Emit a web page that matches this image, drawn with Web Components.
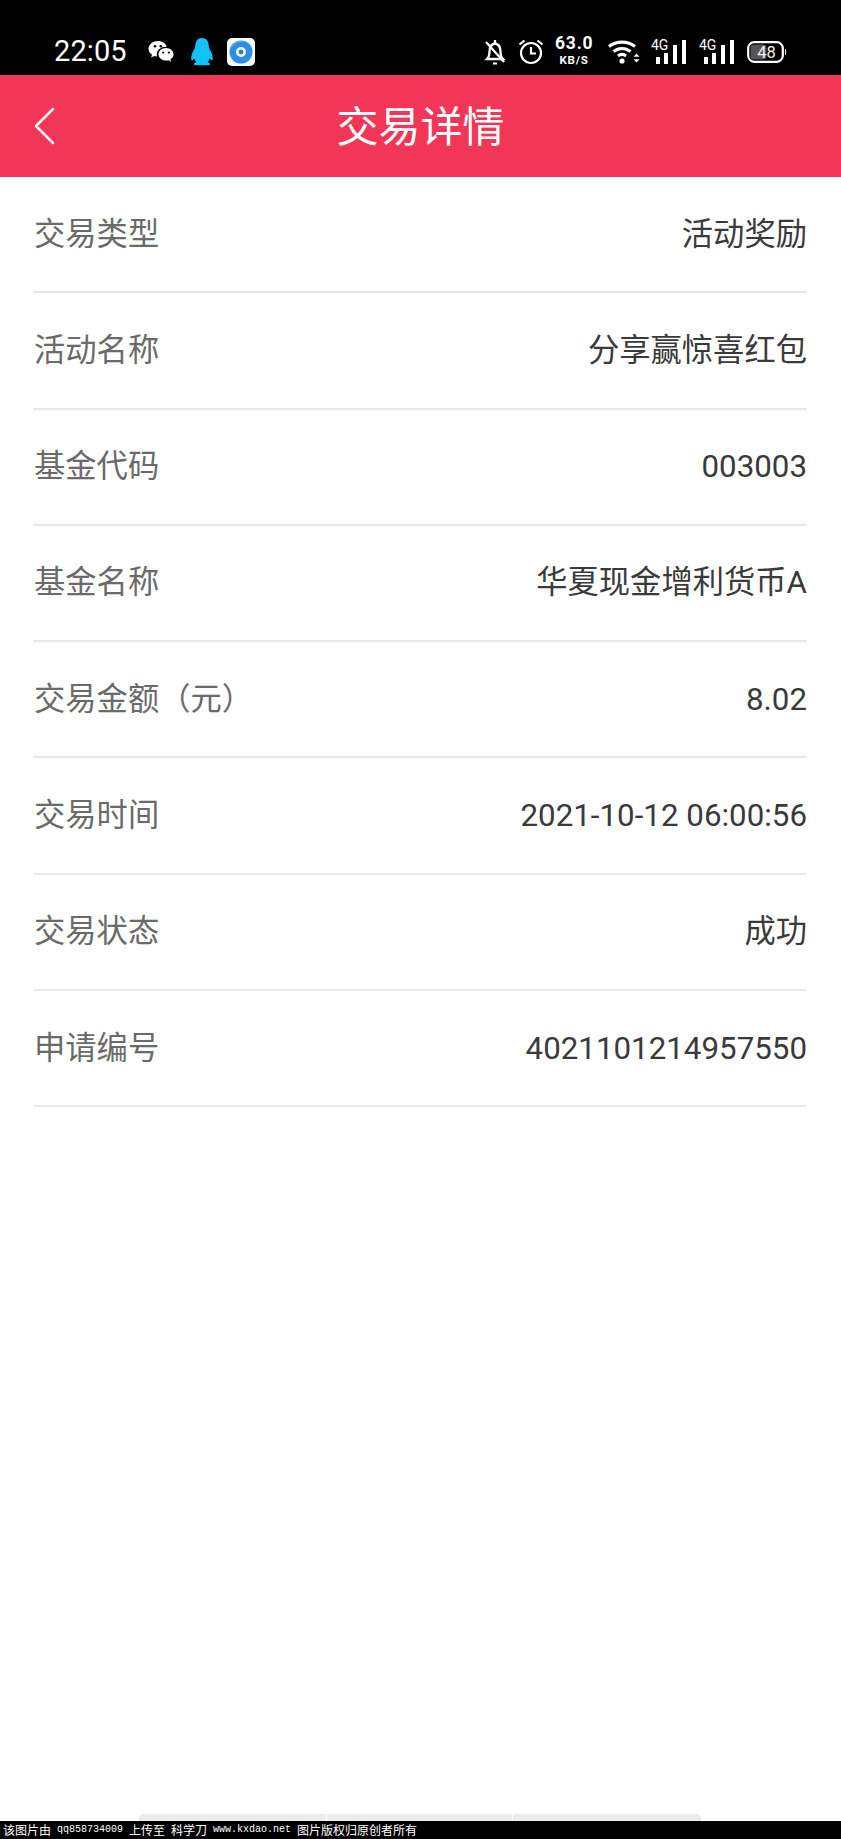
<!DOCTYPE html>
<html><head><meta charset="utf-8">
<style>
html,body{margin:0;padding:0;background:#fff}
body{width:841px;height:1839px;display:flex;flex-direction:column;font-family:Roboto,"Noto Sans CJK SC",sans-serif;overflow:hidden}
</style></head><body>
<status-bar></status-bar>
<nav-bar title="交易详情"></nav-bar>
<detail-list>
<detail-row label="交易类型" value="活动奖励"></detail-row>
<detail-row label="活动名称" value="分享赢惊喜红包"></detail-row>
<detail-row label="基金代码" value="003003"></detail-row>
<detail-row label="基金名称" value="华夏现金增利货币A"></detail-row>
<detail-row label="交易金额（元）" value="8.02"></detail-row>
<detail-row label="交易时间" value="2021-10-12 06:00:56"></detail-row>
<detail-row label="交易状态" value="成功"></detail-row>
<detail-row label="申请编号" value="4021101214957550"></detail-row>
</detail-list>
<bottom-tabs></bottom-tabs>
<water-mark></water-mark>
<script>
function def(name,html,setup){
  customElements.define(name,class extends HTMLElement{
    connectedCallback(){
      if(this.shadowRoot)return;
      const r=this.attachShadow({mode:'open'});
      r.innerHTML=html;
      if(setup)setup(r,this);
    }
  });
}
const sig=`<svg width="36" height="28" viewBox="0 0 36 28"><text x="0" y="12" font-family="Roboto" font-size="14" fill="#fff">4G</text><g fill="#fff"><rect x="5" y="19" width="4" height="7"/><rect x="13" y="15" width="4" height="11"/><rect x="22" y="7" width="4" height="19"/><rect x="31" y="2" width="4" height="24"/></g></svg>`;
def('status-bar',`<style>
:host{display:flex;align-items:center;height:75px;background:#000;color:#fff;box-sizing:border-box;padding:28px 0 0 54px;flex:none}
.t{font:29px/1 Roboto,sans-serif;width:94px;letter-spacing:.1px}
.l{display:flex;align-items:center;gap:16px}
.r{margin-left:auto;display:flex;align-items:center;height:40px;padding-right:54px}
svg{display:block}
.sp{font:700 17.500px/1 Roboto,sans-serif;letter-spacing:.8px;text-align:center;width:38px;margin:-2px 0 0 11px}
.sp small{display:block;font-size:11.500px;line-height:1;letter-spacing:.8px;margin-top:3px}
</style>
<span class="t">22:05</span>
<span class="l">
<svg width="26" height="24" viewBox="0 0 26 24"><path fill="#fff" d="M10 1C4.700 1 .5 4.400.5 8.800c0 2.500 1.400 4.600 3.500 6l-.9 2.800 3.200-1.700c.9.300 1.800.4 2.800.5-.2-.7-.3-1.300-.3-2 0-4.300 4.100-7.600 9.100-7.600h.8C17.800 3.300 14.300 1 10 1z"/><path fill="#fff" d="M25.500 14.300c0-3.500-3.400-6.300-7.500-6.300s-7.500 2.800-7.500 6.300 3.400 6.300 7.500 6.300c.8 0 1.700-.1 2.400-.4l2.700 1.500-.7-2.400c2-1.100 3.100-2.800 3.100-4.500z"/><g fill="#000"><circle cx="7" cy="6.300" r="1.300"/><circle cx="12.800" cy="6.300" r="1.300"/><circle cx="15.200" cy="12.600" r="1.100"/><circle cx="20.800" cy="12.600" r="1.100"/></g></svg>
<svg width="24" height="28" viewBox="0 0 24 28"><path fill="#12c2f7" d="M12 0C7.500 0 5.500 3.500 5.300 7.500c0 2-.9 3.300-1.900 5.200C1.700 16 .7 20.400 1.500 22c.7.900 2.100-.7 2.800-1.500.3 1.400 1 2.600 2 3.500-1.400.5-2.500 1.200-2.400 2.200.2 1.400 5.200 1.300 8.100.8 2.900.5 7.900.6 8.100-.8.100-1-1-1.700-2.400-2.200 1-.9 1.700-2.100 2-3.500.7.800 2.100 2.400 2.800 1.500.8-1.600-.2-6-1.900-9.300-1-1.900-1.900-3.200-1.900-5.200C18.500 3.500 16.500 0 12 0z"/></svg>
<svg width="28" height="28" viewBox="0 0 28 28" style="margin-left:-3px"><rect width="28" height="28" rx="5" fill="#fbfdff"/><circle cx="14" cy="14" r="11.500" fill="#2a8fe6"/><path d="M3.500 12A11 11 0 0 1 20 4.500 12 12 0 0 0 3.500 12z" fill="#9fd0f5"/><circle cx="14" cy="14" r="5" fill="#fff"/><circle cx="14" cy="14" r="2.400" fill="#1f7fd6"/></svg>
</span>
<span class="r">
<svg width="22" height="28" viewBox="0 0 22 28" fill="none" stroke="#fff" stroke-width="2.300"><path d="M3 21c2-2 2.500-3.500 2.500-7 0-4.500 2-8 5.500-8.500 3.500.5 5.500 4 5.500 8.500 0 3 .5 5 2.500 7z"/><path d="M2 4l18 20"/><path d="M9 25.500h4" stroke-width="2"/><path d="M11 2v3"/></svg>
<svg width="26" height="27" viewBox="0 0 26 27" fill="none" stroke="#fff" stroke-width="2.200" style="margin-left:12px"><circle cx="13" cy="15" r="10"/><path d="M13 9v6.500h5"/><path d="M1.500 6.500l5-4M24.500 6.500l-5-4"/></svg>
<span class="sp">63.0<small>KB/S</small></span>
<svg width="32" height="24" viewBox="0 0 32 24" fill="none" stroke="#fff" stroke-width="3.200" style="margin-left:15px"><path d="M1 6.500C8 .6 20 .6 27 6.500"/><path d="M5.500 11.500c5-4 12-4 17 0"/><path d="M10 16c2.500-2 5.500-2 8 0"/><circle cx="14" cy="21" r="2.600" fill="#fff" stroke="none"/><path d="M25.500 16.800l3-3.300 3 3.300z M25.500 19.200l3 3.300 3-3.300z" fill="#fff" stroke="none"/></svg>
<span style="margin-left:11px">${sig}</span>
<span style="margin-left:12px">${sig}</span>
<svg width="40" height="24" viewBox="0 0 40 24" style="margin-left:12px"><rect x="1.200" y="2.200" width="34.600" height="19.600" rx="6" fill="none" stroke="#fff" stroke-width="2.200"/><rect x="3.500" y="4.500" width="16" height="15" rx="3" fill="#555"/><path d="M38 8.500c1.500.7 1.500 6.300 0 7z" fill="#fff"/><text x="19.500" y="18" text-anchor="middle" font-family="Roboto" font-size="16.500" fill="#f0f0f0">48</text></svg>
</span>`);
def('nav-bar',`<style>
:host{display:flex;align-items:center;justify-content:center;position:relative;height:102px;background:#f23658;flex:none;box-sizing:border-box;padding-bottom:5px}
h1{margin:0;color:#fff;font:400 42px/1 "Noto Sans CJK SC",sans-serif}
svg{position:absolute;left:33px;top:32px}
</style>
<svg width="24" height="38" viewBox="0 0 24 38" fill="none" stroke="#fff" stroke-width="2.500" stroke-linecap="round" stroke-linejoin="round" opacity=".95"><path d="M20 2L3 19l17 17"/></svg>
<h1></h1>`,(r,h)=>{r.querySelector('h1').textContent=h.getAttribute('title')});
def('detail-list',`<style>:host{display:block;flex:1;min-height:0;padding:0 34px 0 33px}</style><slot></slot>`);
def('detail-row',`<style>
:host{display:flex;align-items:center;justify-content:space-between;height:116.3px;box-sizing:border-box;border-bottom:2px solid #e8e8e8;font:31.3px/1 Roboto,"Noto Sans CJK SC",sans-serif}
.a{color:#6a6a6a;margin-left:1px}.b{color:#3a3a3a}
</style><span class="a"></span><span class="b"></span>`,(r,h)=>{r.querySelector('.a').textContent=h.getAttribute('label');r.querySelector('.b').textContent=h.getAttribute('value')});
def('bottom-tabs',`<style>
:host{display:flex;justify-content:flex-start;gap:1px;height:7px;padding-left:139px;flex:none}
i{display:block;height:7px;background:#ececec}
i:nth-of-type(1){width:187px;border-radius:5px 0 0 0}
i:nth-of-type(2){width:185px}
i:nth-of-type(3){width:188px;border-radius:0 5px 0 0}
</style><i></i><i></i><i></i>`);
def('water-mark',`<style>
:host{display:flex;gap:6px;height:18px;background:#000;color:#fff;font:12px/18px "Noto Sans CJK SC",sans-serif;padding-left:3px;white-space:nowrap;flex:none;overflow:hidden}
b{font:400 10px/18px "Liberation Mono",monospace}
</style><span>该图片由</span><b>qq858734009</b><span>上传至</span><span>科学刀</span><b>www.kxdao.net</b><span>图片版权归原创者所有</span>`);
</script>
</body></html>
